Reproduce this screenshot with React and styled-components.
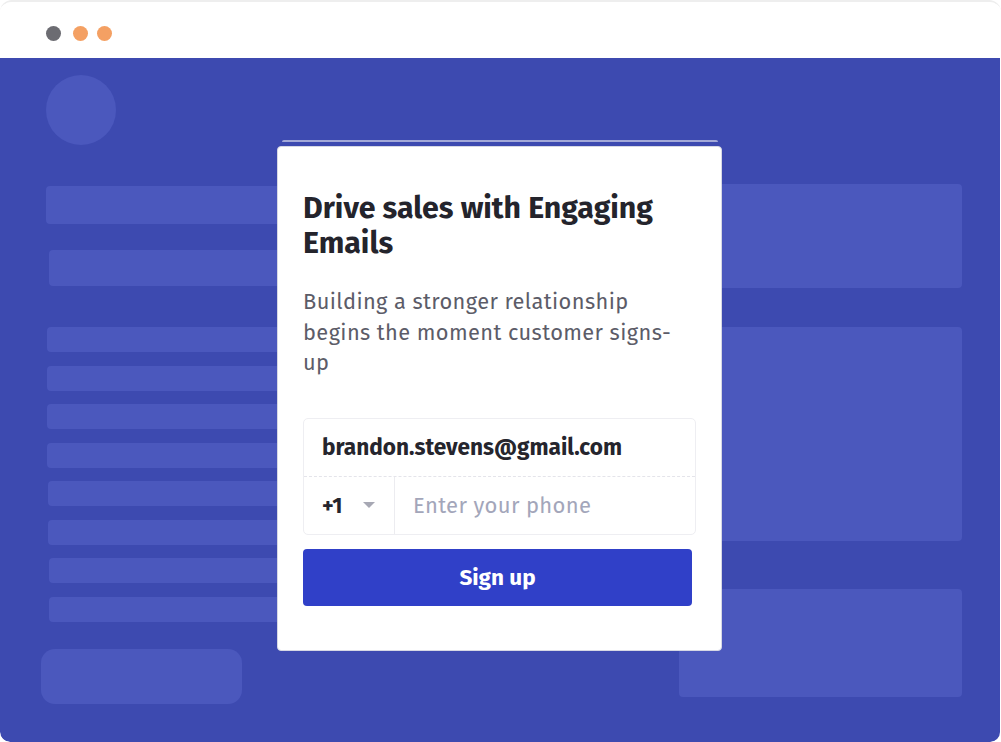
import React from "react";
import styled, { createGlobalStyle } from "styled-components";

const GlobalStyle = createGlobalStyle`
  html, body {
    margin: 0;
    padding: 0;
    background: #ffffff;
  }
  body {
    font-family: "Fira Sans", "Lato", "Noto Sans", sans-serif;
  }
`;

const Window = styled.div`
  width: 1001px;
  height: 742px;
  display: flex;
  flex-direction: column;
  box-sizing: border-box;
  border-top: 2px solid #eeeeee;
  border-radius: 12px 12px 10px 10px;
  overflow: hidden;
`;

const TitleBar = styled.div`
  height: 56px;
  display: flex;
  align-items: center;
  gap: 9px;
  padding-left: 46px;
  padding-top: 6px;
  box-sizing: border-box;
  background: #ffffff;
`;

const Dot = styled.span`
  width: 15px;
  height: 15px;
  border-radius: 50%;
  background: ${(p) => p.$color};
  margin-right: ${(p) => p.$gap || 0}px;
`;

const Stage = styled.div`
  position: relative;
  flex: 1;
  display: flex;
  justify-content: space-between;
  background: #3d4ab0;
  border-radius: 0 0 10px 10px;
  margin-right: 1px;
`;

const LeftColumn = styled.div`
  width: 250px;
  padding-left: 41px;
  display: flex;
  flex-direction: column;
`;

const RightColumn = styled.div`
  width: 283px;
  margin-right: 38px;
  display: flex;
  flex-direction: column;
`;

const Ghost = styled.div`
  background: #4b58bd;
  border-radius: ${(p) => p.$radius || 4}px;
  height: ${(p) => p.$h}px;
  margin-top: ${(p) => p.$top || 0}px;
  margin-left: ${(p) => p.$left || 0}px;
  width: ${(p) => (p.$w ? `${p.$w}px` : "auto")};
`;

const GhostCircle = styled.div`
  width: 70px;
  height: 70px;
  border-radius: 50%;
  background: #4b58bd;
  margin-top: 17px;
  margin-left: 5px;
`;

const GhostList = styled.div`
  display: flex;
  flex-direction: column;
  gap: 13.5px;
  margin-top: 41px;
  margin-left: 6px;
`;

const Card = styled.div`
  position: absolute;
  left: 277px;
  top: 88px;
  width: 445px;
  height: 505px;
  box-sizing: border-box;
  background: #ffffff;
  border: 1px solid #d6d8e4;
  border-radius: 4px;
  padding: 44px 25px 0 25px;
  &::before {
    content: "";
    position: absolute;
    left: 4px;
    right: 3px;
    top: -7px;
    height: 2px;
    border-radius: 2px 2px 0 0;
    background: #a3a9d8;
  }
`;

const Heading = styled.h1`
  margin: 0;
  font-size: 30.3px;
  line-height: 35px;
  font-weight: 700;
  color: #24242c;
`;

const Lead = styled.p`
  margin: 26px 0 0 0;
  max-width: 385px;
  font-size: 21.8px;
  line-height: 30.5px;
  letter-spacing: 0.4px;
  color: #5c5c68;
`;

const FieldGroup = styled.div`
  margin-top: 39px;
  width: 391px;
  border: 1px solid #eeeef2;
  border-radius: 5px;
  display: flex;
  flex-direction: column;
`;

const FieldRow = styled.div`
  height: 57px;
  display: flex;
  align-items: center;
  & + & {
    border-top: 1px dashed #e4e4ea;
  }
`;

const EmailValue = styled.span`
  padding-left: 18px;
  font-size: 22.6px;
  font-weight: 700;
  color: #25252d;
`;

const CountryCode = styled.div`
  width: 91px;
  height: 100%;
  display: flex;
  align-items: center;
  gap: 21px;
  padding-left: 18px;
  box-sizing: border-box;
  border-right: 1px solid #ececf0;
  font-size: 22px;
  font-weight: 700;
  color: #25252d;
`;

const Caret = styled.span`
  width: 0;
  height: 0;
  border-left: 6px solid transparent;
  border-right: 6px solid transparent;
  border-top: 6px solid #a7a8b4;
`;

const Placeholder = styled.span`
  padding-left: 18px;
  font-size: 22px;
  letter-spacing: 0.35px;
  color: #a3a6ba;
`;

const SubmitButton = styled.button`
  margin-top: 14px;
  width: 389px;
  height: 57px;
  border: none;
  border-radius: 4px;
  background: #3040c8;
  color: #ffffff;
  font-family: inherit;
  font-size: 22.5px;
  font-weight: 700;
  cursor: pointer;
`;

const listRows = [0, 0, 0, 0, 1, 1, 2, 2];

const App = () => {
  return (
    <>
      <GlobalStyle />
      <Window>
        <TitleBar>
          <Dot $color="#6c6c72" $gap={3} />
          <Dot $color="#f4a063" />
          <Dot $color="#f4a063" />
        </TitleBar>
        <Stage>
          <LeftColumn>
            <GhostCircle />
            <Ghost $h={38} $top={41} $left={5} />
            <Ghost $h={36} $top={26} $left={8} />
            <GhostList>
              {listRows.map((shift, i) => (
                <Ghost key={i} $h={25} $left={shift} />
              ))}
            </GhostList>
            <Ghost $h={55} $w={201} $top={27} $radius={14} />
          </LeftColumn>
          <RightColumn>
            <Ghost $h={104} $top={126} />
            <Ghost $h={214} $top={39} />
            <Ghost $h={108} $top={48} />
          </RightColumn>
          <Card>
            <Heading>Drive sales with Engaging Emails</Heading>
            <Lead>Building a stronger relationship begins the moment customer signs-up</Lead>
            <FieldGroup>
              <FieldRow>
                <EmailValue>brandon.stevens@gmail.com</EmailValue>
              </FieldRow>
              <FieldRow>
                <CountryCode>
                  +1
                  <Caret />
                </CountryCode>
                <Placeholder>Enter your phone</Placeholder>
              </FieldRow>
            </FieldGroup>
            <SubmitButton>Sign up</SubmitButton>
          </Card>
        </Stage>
      </Window>
    </>
  );
};

export default App;
